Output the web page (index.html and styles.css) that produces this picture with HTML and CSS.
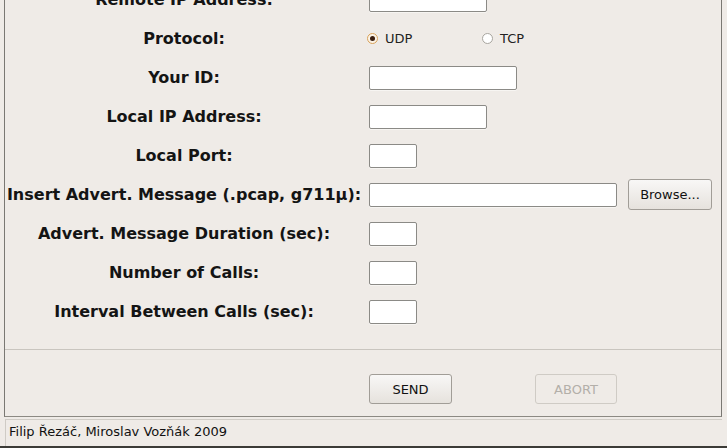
FILE: index.html
```html
<!DOCTYPE html>
<html lang="en">
<head>
    <meta charset="UTF-8">
    <title>Advert caller</title>
    <link rel="stylesheet" href="styles.css">
</head>
<body>
    <div class="window">
        <div class="panel">
            <form class="form">
                <div class="row">
                    <label class="label">Remote IP Address:</label>
                    <input class="field mid" type="text">
                </div>
                <div class="row">
                    <label class="label">Protocol:</label>
                    <div class="radios">
                        <span class="radio"><span class="dot checked"></span>UDP</span>
                        <span class="radio"><span class="dot"></span>TCP</span>
                    </div>
                </div>
                <div class="row">
                    <label class="label">Your ID:</label>
                    <input class="field wide" type="text">
                </div>
                <div class="row">
                    <label class="label">Local IP Address:</label>
                    <input class="field mid" type="text">
                </div>
                <div class="row">
                    <label class="label">Local Port:</label>
                    <input class="field small" type="text">
                </div>
                <div class="row">
                    <label class="label">Insert Advert. Message (.pcap, g711µ):</label>
                    <input class="field long" type="text">
                    <button type="button" class="btn browse">Browse...</button>
                </div>
                <div class="row">
                    <label class="label">Advert. Message Duration (sec):</label>
                    <input class="field small" type="text">
                </div>
                <div class="row">
                    <label class="label">Number of Calls:</label>
                    <input class="field small" type="text">
                </div>
                <div class="row">
                    <label class="label">Interval Between Calls (sec):</label>
                    <input class="field small" type="text">
                </div>
            </form>
            <div class="actions">
                <button type="button" class="btn send">SEND</button>
                <button type="button" class="btn abort" disabled>ABORT</button>
            </div>
        </div>
        <div class="statusbar">Filip Řezáč, Miroslav Vozňák 2009</div>
    </div>
</body>
</html>
```

FILE: styles.css
```css
html, body {
    margin: 0;
    padding: 0;
    height: 448px;
    overflow: hidden;
    background-color: #efebe7;
    font-family: 'DejaVu Sans', sans-serif;
    color: #1a1a1a;
}
.window {
    height: 446px;
    border-bottom: 2px solid #3c3b37;
    display: flex;
    flex-direction: column;
    padding-left: 4px;
    padding-right: 5px;
    box-sizing: content-box;
}
.panel {
    height: 417px;
    border-left: 1px solid #7a7873;
    border-right: 1px solid #7a7873;
    border-bottom: 1px solid #8c8983;
    box-sizing: border-box;
    display: flex;
    flex-direction: column;
}
.form {
    margin-top: -20px;
    padding-bottom: 18px;
    border-bottom: 1px solid #c9c5bf;
}
.row {
    height: 39px;
    display: flex;
    align-items: center;
}
.label {
    width: 358px;
    margin-right: 6px;
    text-align: center;
    font-weight: bold;
    font-size: 16px;
    color: #141414;
    white-space: nowrap;
}
.field {
    height: 24px;
    box-sizing: border-box;
    border: 1px solid #8b8a86;
    border-radius: 2px;
    background: #fff;
    box-shadow: 0 1px 0 #f7f5f2;
    padding: 0;
    margin: 0;
}
.small { width: 48px; }
.mid { width: 118px; }
.wide { width: 148px; }
.long { width: 248px; }
.radios {
    display: flex;
    font-size: 13px;
    color: #222;
}
.radio {
    display: flex;
    align-items: center;
    width: 117px;
    margin-left: -2px;
}
.dot {
    width: 11px;
    height: 11px;
    box-sizing: border-box;
    border-radius: 50%;
    border: 1px solid #a8a59f;
    background: #fff;
    margin-right: 7px;
    position: relative;
}
.dot.checked {
    border-color: #d9a25a;
    background: #fbf3e7;
}
.dot.checked::after {
    content: "";
    position: absolute;
    left: 2px;
    top: 2px;
    width: 5px;
    height: 5px;
    border-radius: 50%;
    background: #3a1e10;
}
.btn {
    font-family: 'DejaVu Sans', sans-serif;
    font-size: 13px;
    height: 30px;
    box-sizing: border-box;
    border: 1px solid #a19d97;
    border-radius: 3px;
    background: linear-gradient(#f8f7f6, #e6e2dd);
    color: #111;
    padding: 0;
    margin: 0;
}
.browse {
    width: 84px;
    height: 31px;
    margin-left: 11px;
}
.actions {
    display: flex;
    padding-top: 24px;
    padding-left: 364px;
}
.send {
    width: 83px;
}
.abort {
    width: 82px;
    margin-left: 83px;
    color: #b3afa9;
    border-color: #cfcbc5;
    background: #efebe7;
}
.statusbar {
    margin-top: 2px;
    margin-left: 1px;
    flex: 1;
    border-top: 1px solid #d0ccc6;
    border-left: 1px solid #cfcbc5;
    font-size: 13px;
    padding-left: 3px;
    padding-bottom: 4px;
    display: flex;
    align-items: center;
    color: #111;
}
```
